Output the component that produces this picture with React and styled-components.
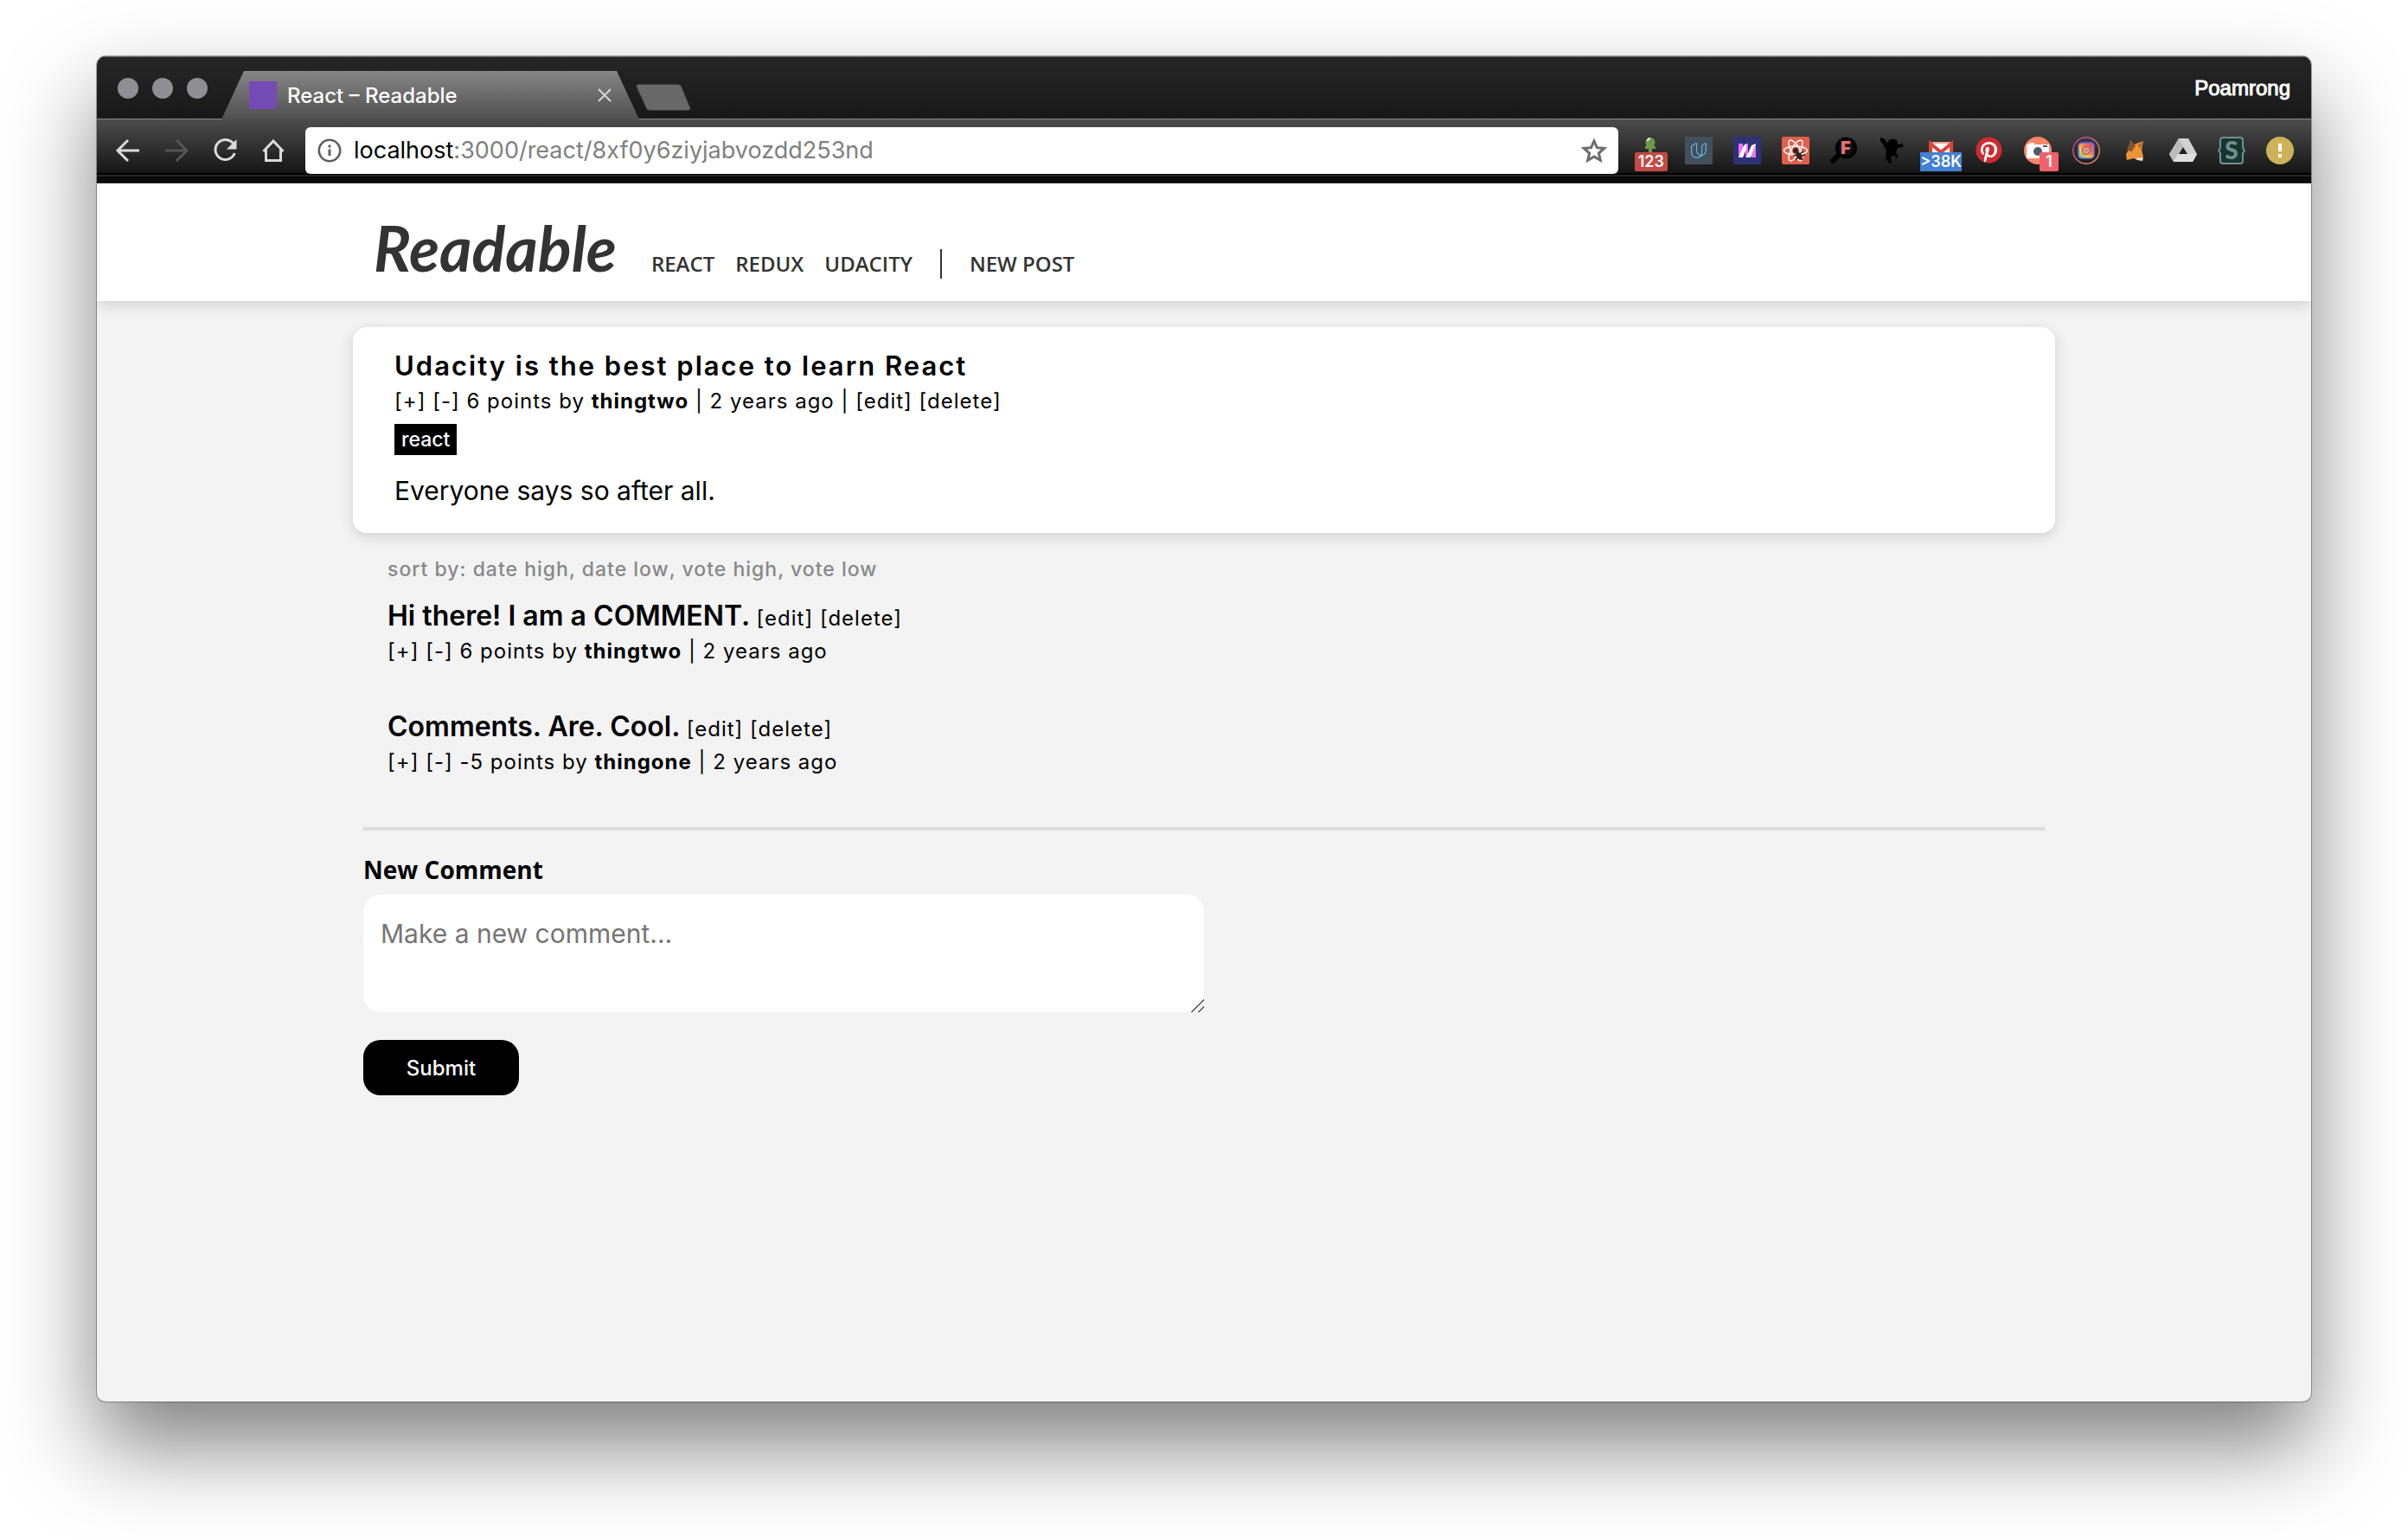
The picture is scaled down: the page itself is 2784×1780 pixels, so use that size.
import React from 'react';
import styled, { createGlobalStyle, css } from 'styled-components';
import { SiUdacity } from 'react-icons/si';
import { FaPinterest } from 'react-icons/fa';

const sans = 'Inter, Roboto, "Liberation Sans", sans-serif';
const humanist = '"Open Sans", "Noto Sans", sans-serif';

const GlobalStyle = createGlobalStyle`
  *, *::before, *::after { box-sizing: border-box; }
  body { margin: 0; background: #fff; color: #000; font-family: ${sans}; }
  h1, h2, h3, p { margin: 0; }
  button { margin: 0; padding: 0; border: 0; background: none; color: inherit; font: inherit; letter-spacing: inherit; cursor: pointer; }
  a { color: inherit; text-decoration: none; }
`;

/* ---------- window ---------- */

const Desktop = styled.div`
  display: flex;
  min-height: 100vh;
  padding: 65px 112px 160px;
`;

const BrowserWindow = styled.div`
  flex: 1;
  min-width: 0;
  display: flex;
  flex-direction: column;
  overflow: hidden;
  border-radius: 10px;
  background: #f3f3f3;
  box-shadow: 0 0 0 1px rgba(0, 0, 0, 0.3), 0 50px 100px rgba(0, 0, 0, 0.5);
`;

const TitleBar = styled.div`
  display: flex;
  height: 73px;
  padding: 0 24px;
  background: linear-gradient(#262626, #181818);
  box-shadow: inset 0 1px #6a6a6a, inset 0 -1px #8a8a8a;
`;

const TrafficLights = styled.div`
  display: flex;
  align-items: center;
  gap: 16px;
`;

const Light = styled.button.attrs({ type: 'button' })`
  width: 24px;
  height: 24px;
  border-radius: 50%;
  background: #8f8e94;
`;

const Tab = styled.div`
  align-self: flex-end;
  display: flex;
  align-items: center;
  width: 483px;
  height: 56px;
  margin-left: 16px;
  padding: 0 32px;
  background: linear-gradient(#868686, #4f4f4f);
  clip-path: polygon(26px 0, 457px 0, 100% 100%, 0 100%);
  color: #fff;
  font-size: 24px;
  font-weight: 500;
`;

const Favicon = styled.span`
  width: 32px;
  height: 32px;
  margin-right: 12px;
  background: #744bb5;
`;

const TabTitle = styled.span`
  flex: 1;
  white-space: nowrap;
`;

const TabClose = styled.button.attrs({ type: 'button' })`
  display: flex;
`;

const NewTab = styled.button.attrs({ type: 'button' })`
  align-self: flex-end;
  display: flex;
  height: 31px;
  margin-bottom: 10px;
  margin-left: -4px;
`;

const Profile = styled.button.attrs({ type: 'button' })`
  align-self: center;
  margin-left: auto;
  color: #fff;
  font-family: "Liberation Sans", Arial, sans-serif;
  font-size: 24px;
  line-height: 32px;
  -webkit-text-stroke: 1px #fff;
`;

const Toolbar = styled.div`
  display: flex;
  gap: 9px;
  height: 74px;
  padding: 9px 8px 11px;
  background: linear-gradient(
    #4c4c4c 0, #151515 62px, #000 62px, #000 64px, #262626 64px, #262626 66px,
    #0b0b0b 66px, #0b0b0b 73px, #2a2a2a 73px
  );
`;

const IconRow = styled.div`
  display: flex;
`;

const IconButton = styled.button.attrs({ type: 'button' })`
  position: relative;
  display: flex;
  align-items: center;
  justify-content: center;
  width: 56px;
  height: 54px;
  color: ${p => (p.$dim ? '#555' : '#dadada')};
`;

const Badge = styled.span`
  position: absolute;
  top: 29px;
  right: ${p => p.$right}px;
  min-width: 22px;
  padding: 0 ${p => p.$pad}px;
  border-radius: ${p => p.$radius}px;
  background: ${p => p.$color};
  color: #fff;
  font-size: 18px;
  font-weight: 600;
  line-height: 22px;
`;

const AddressBar = styled.form`
  flex: 1;
  display: flex;
  align-items: center;
  gap: 12px;
  min-width: 0;
  padding: 0 12px;
  border-radius: 6px;
  background: #fff;
  color: #5f5f5f;
`;

const Url = styled.a`
  flex: 1;
  color: #808080;
  font-size: 27px;
  line-height: 40px;
  white-space: nowrap;
`;

const Host = styled.span`
  color: #000;
`;

const StarButton = styled.button.attrs({ type: 'button' })`
  display: flex;
  color: #6b6b6b;
`;

/* ---------- site header ---------- */

const Container = styled.div`
  max-width: 1968px;
  margin: 0 auto;
`;

const Header = styled.header`
  position: relative;
  height: 136px;
  background: #fff;
  box-shadow: 0 4px 16px rgba(0, 0, 0, 0.15);
`;

const HeaderRow = styled(Container)`
  display: flex;
  align-items: baseline;
  gap: 40px;
  padding: 34px 24px 0;
  color: #333;
`;

const Logo = styled.a`
  font-family: Lato, cursive;
  font-size: 72px;
  font-style: italic;
  font-weight: 700;
  line-height: 80px;
`;

const Nav = styled.nav`
  display: flex;
  align-items: center;
  gap: 24px;
  font-family: ${humanist};
  font-size: 24px;
  font-weight: 600;
  line-height: 32px;
`;

const Divider = styled.span`
  width: 2px;
  height: 34px;
  margin: 0 8px;
  background: #333;
`;

/* ---------- post and comments ---------- */

const Main = styled(Container).attrs({ as: 'main' })`
  padding-top: 30px;
`;

const PostCard = styled.article`
  padding: 24px 48px 28px;
  border-radius: 16px;
  background: #fff;
  box-shadow: 0 4px 16px rgba(0, 0, 0, 0.14);
`;

const PostTitle = styled.h1`
  font-size: 31px;
  font-weight: 600;
  letter-spacing: 2px;
  line-height: 42px;
`;

const smallText = css`
  font-size: 24px;
  font-weight: 400;
  letter-spacing: 1px;
  line-height: 40px;
`;

const Meta = styled.p`
  ${smallText}
`;

const Category = styled.a`
  display: block;
  width: fit-content;
  margin: 6px 0 20px;
  padding: 0 8px;
  background: #000;
  color: #fff;
  font-size: 23px;
  font-weight: 500;
  line-height: 36px;
`;

const PostBody = styled.p`
  font-size: 30px;
  line-height: 42px;
`;

const Comments = styled.section`
  padding: 22px 40px 0;
`;

const SortBar = styled.p`
  ${smallText}
  margin-bottom: 13px;
  color: #888;
  font-size: 23px;
  font-weight: 500;
`;

const CommentItem = styled.article`
  margin-bottom: 46px;
`;

const CommentText = styled.h2`
  font-size: 32px;
  font-weight: 600;
  line-height: 42px;
`;

const CommentActions = styled.span`
  ${smallText}
  line-height: 1;
`;

const Rule = styled.hr`
  height: 4px;
  margin: 55px 12px 25px;
  border: 0;
  background: #ddd;
`;

const CommentForm = styled.form`
  padding: 0 12px;
`;

const Label = styled.label`
  display: block;
  margin-bottom: 9px;
  font-family: ${humanist};
  font-size: 28px;
  font-weight: 700;
  line-height: 40px;
`;

const TextArea = styled.textarea`
  display: block;
  width: 50%;
  height: 136px;
  margin: 0 0 32px;
  padding: 24px 20px;
  border: 0;
  border-radius: 20px;
  background: #fff;
  font-family: ${sans};
  font-size: 30px;
  line-height: 42px;
  &::placeholder { color: #757575; }
  &::-webkit-resizer {
    background: linear-gradient(
      135deg,
      transparent 47%, #555 48%, #555 54%, transparent 55%,
      transparent 75%, #555 76%, #555 82%, transparent 83%
    );
  }
`;

const Submit = styled.button`
  width: 180px;
  height: 64px;
  border-radius: 20px;
  background: #000;
  color: #fff;
  font-size: 24px;
  font-weight: 500;
`;

/* ---------- icons ---------- */

const Drawing = styled.svg`
  flex: none;
  overflow: visible;
`;

const Glyph = ({ size = 32, ...rest }) => (
  <Drawing width={size} height={size} viewBox="0 0 32 32" fill="none" aria-hidden="true" {...rest} />
);

const BackIcon = () => (
  <Glyph stroke="currentColor" strokeWidth="3"><path d="M29 16H5M16 4 4 16l12 12" /></Glyph>
);
const ForwardIcon = () => (
  <Glyph stroke="currentColor" strokeWidth="3"><path d="M3 16h24M16 4l12 12-12 12" /></Glyph>
);
const ReloadIcon = () => (
  <Glyph>
    <path d="M26 8.500A11.500 11.500 0 1 0 27.300 19" stroke="currentColor" strokeWidth="3" />
    <path d="M29.500 3v11.500H18z" fill="currentColor" />
  </Glyph>
);
const HomeIcon = () => (
  <Glyph stroke="currentColor" strokeWidth="3"><path d="M4.500 17 16 5l11.500 12M7.500 15v12.500h17V15" /></Glyph>
);
const InfoIcon = () => (
  <Glyph>
    <circle cx="16" cy="16" r="12.200" stroke="currentColor" strokeWidth="2.600" />
    <path d="M16 14.500v7.500M16 9.500v3" stroke="currentColor" strokeWidth="3" />
  </Glyph>
);
const StarIcon = () => (
  <Glyph stroke="currentColor" strokeWidth="3">
    <path d="m16 5 3.400 7.700 8.300.8-6.300 5.500 1.900 8.200L16 22.900l-7.300 4.300 1.900-8.200-6.300-5.500 8.300-.8z" />
  </Glyph>
);
const CloseIcon = () => (
  <Glyph size={16} stroke="#d6d6d6" strokeWidth="4"><path d="m2 2 28 28M30 2 2 30" /></Glyph>
);
const NewTabIcon = () => (
  <svg width="64" height="31" viewBox="0 0 64 31" aria-hidden="true">
    <path d="M3 .5h46q3 0 4 3l10 24q1 3-2 3H16q-3 0-4-3L1 3.500q-1-3 2-3z" fill="#686868" stroke="#383838" />
  </svg>
);

const SproutIcon = () => (
  <Glyph>
    <circle cx="16" cy="6.500" r="5.500" fill="#6d9a48" />
    <path d="M12 10h8l1 1h1v3h-4v5h-4v-5h-4v-3h1z" fill="#6d9a48" />
    <path d="M13 5q0-3 3-3" stroke="#e4f1d4" strokeWidth="2" />
  </Glyph>
);
const UdacityIcon = () => (
  <Glyph>
    <rect width="32" height="32" fill="#434f5b" />
    <g color="#62b4df"><SiUdacity x="7" y="7" size="18" /></g>
  </Glyph>
);
const StripesIcon = () => (
  <Glyph>
    <rect width="32" height="32" fill="#2e3176" />
    <path d="M6 8h5v9l-5 7zM14 8h3v16h-3zM21 15l5-7v16h-5z" fill="#ea72f5" />
    <path d="m6 24 6-14 3-2v6l-4 10zM15 24l6-14 5-2-6 16z" fill="#fff" />
  </Glyph>
);
const ReactBugIcon = () => (
  <Glyph>
    <rect width="32" height="32" rx="2" fill="#e2604b" />
    <g stroke="#fff" strokeWidth="1.500">
      <ellipse cx="16" cy="16" rx="13.500" ry="5" />
      <ellipse cx="16" cy="16" rx="13.500" ry="5" transform="rotate(60 16 16)" />
      <ellipse cx="16" cy="16" rx="13.500" ry="5" transform="rotate(120 16 16)" />
    </g>
    <circle cx="16" cy="16" r="3" fill="#33201f" />
    <ellipse cx="20" cy="22" rx="3" ry="5" transform="rotate(-35 20 22)" fill="#33201f" />
    <path d="m13 22 5-1m-2 6 3-4m6-6-4 3m6 1-5 1m2 5-2-3" stroke="#33201f" strokeWidth="1.500" />
  </Glyph>
);
const MagnifierIcon = () => (
  <Glyph>
    <path d="m3 28 9-9" stroke="#000" strokeWidth="6" strokeLinecap="round" />
    <circle cx="18.500" cy="13" r="10.500" fill="#111" stroke="#000" strokeWidth="4" />
    <text x="12" y="20" fill="#ee6e73" fontFamily="Inter, sans-serif" fontSize="20" fontWeight="900">F</text>
  </Glyph>
);
const NinjaIcon = () => (
  <Glyph>
    <path d="M2 1 6 2l4 5 2-3q4-3 9 0l1 5 5-1 2 2-1 2-6 1-2 5 3 5-2 2-4-4-3 3 1 5-2 3-5-7 1-9-4-7-3-4z" fill="#000" />
  </Glyph>
);
const MailIcon = () => (
  <Glyph>
    <path d="M2 6h28v18H2z" fill="#fff" />
    <path d="M4 18V8l12 10L28 8v10" stroke="#db4437" strokeWidth="4" />
    <path d="M4 7h24" stroke="#db4437" strokeWidth="1" />
  </Glyph>
);
const PinterestIcon = () => (
  <Glyph>
    <circle cx="15" cy="16" r="14" fill="#fff" />
    <g color="#cf2a30"><FaPinterest size="31" /></g>
  </Glyph>
);
const CameraIcon = () => (
  <Glyph>
    <circle cx="16" cy="16" r="16" fill="#ff8568" />
    <path d="M3 9h3V7h6v2h17v16H3z" fill="#fff" />
    <circle cx="16" cy="17" r="5" fill="#4c5a6b" />
    <path d="M22 11h5" stroke="#4c5a6b" strokeWidth="2" />
  </Glyph>
);
const InstaIcon = () => (
  <Glyph>
    <defs>
      <linearGradient id="ring" x1="0" y1="0" x2="1" y2="1">
        <stop offset="0" stopColor="#b13aa8" /><stop offset="1" stopColor="#f39a5c" />
      </linearGradient>
      <linearGradient id="lens" x1="0" y1="1" x2="1" y2="0">
        <stop offset="0" stopColor="#35c9a0" /><stop offset=".35" stopColor="#f2d04b" />
        <stop offset=".65" stopColor="#f0704f" /><stop offset="1" stopColor="#b14bd6" />
      </linearGradient>
    </defs>
    <circle cx="16" cy="16" r="15.200" stroke="url(#ring)" strokeWidth="1.400" />
    <rect x="7" y="7" width="18" height="18" rx="4" fill="url(#lens)" stroke="#6a6be0" strokeWidth="1.500" />
    <circle cx="16" cy="16" r="4.500" stroke="#d9487c" strokeWidth="1.600" fill="#e9a35c" />
    <circle cx="16" cy="16" r="1.500" fill="#4ea8e8" />
    <circle cx="21" cy="10.500" r="1.200" fill="#e0483e" />
  </Glyph>
);
const FoxIcon = () => (
  <Glyph>
    <path d="m11 4 4 5 11-4-2 10 2 8-4 3-7-1-8 2-1-7 4-6z" fill="#ef9433" />
    <path d="m11 4 6 6-4 7-6-1z" fill="#86522b" />
    <path d="m26 5-7 5 4 4z" fill="#b86b26" />
    <path d="m16 25 10-1-1 4-6-1z" fill="#e8e2dc" />
  </Glyph>
);
const DriveIcon = () => (
  <Glyph>
    <path d="M11 2h11l10 18-5 9H5l-5-9z" fill="#d2d2d2" />
    <path d="m11 2 5 9L5 29l-5-9z" fill="#bcbcbc" />
    <path d="M10 20h22l-5 9H5z" fill="#dedede" />
    <path d="m16 12 5 8H11z" fill="#1f1f1f" />
  </Glyph>
);
const BracesIcon = () => (
  <Glyph>
    <path d="M6 1h20q3 0 3 3v9l2 3-2 3v9q0 3-3 3H6q-3 0-3-3v-9l-2-3 2-3V4q0-3 3-3z" fill="#17342f" stroke="#71908e" strokeWidth="2" />
    <text x="16" y="26" textAnchor="middle" fill="#71908e" fontFamily="Lato, sans-serif" fontSize="28" fontWeight="900">S</text>
  </Glyph>
);
const AlertIcon = () => (
  <Glyph>
    <circle cx="16" cy="16" r="16" fill="#ceb25a" />
    <path d="M16 8v9M16 20v4" stroke="#fff" strokeWidth="4" />
  </Glyph>
);

/* ---------- data ---------- */

const extensions = [
  { name: 'Sprout', Icon: SproutIcon, badge: { text: '123', color: '#c44a43', right: 8, pad: 4, radius: 2 } },
  { name: 'Udacity', Icon: UdacityIcon },
  { name: 'Stripes', Icon: StripesIcon },
  { name: 'React debugger', Icon: ReactBugIcon },
  { name: 'Font finder', Icon: MagnifierIcon },
  { name: 'Ninja', Icon: NinjaIcon },
  { name: 'Mail', Icon: MailIcon, badge: { text: '>38K', color: '#4380d6', right: 4, pad: 0, radius: 0 } },
  { name: 'Pinterest', Icon: PinterestIcon },
  { name: 'Camera', Icon: CameraIcon, badge: { text: '1', color: '#f0626c', right: 4, pad: 7, radius: 2 } },
  { name: 'Instagram', Icon: InstaIcon },
  { name: 'Fox wallet', Icon: FoxIcon },
  { name: 'Drive', Icon: DriveIcon },
  { name: 'Snippets', Icon: BracesIcon },
  { name: 'Updates', Icon: AlertIcon },
];

const comments = [
  { id: 1, text: 'Hi there! I am a COMMENT.', score: 6, author: 'thingtwo' },
  { id: 2, text: 'Comments. Are. Cool.', score: -5, author: 'thingone' },
];

const sorts = ['date high', 'date low', 'vote high', 'vote low'];

const Votes = ({ score, author }) => (
  <>
    <button type="button">[+]</button> <button type="button">[-]</button> {score} points by{' '}
    <strong>{author}</strong> | 2 years ago
  </>
);

const EditActions = () => (
  <>
    <button type="button">[edit]</button> <button type="button">[delete]</button>
  </>
);

export default function App() {
  return (
    <Desktop>
      <GlobalStyle />
      <BrowserWindow>
        <TitleBar>
          <TrafficLights>
            <Light aria-label="Close window" />
            <Light aria-label="Minimise window" />
            <Light aria-label="Zoom window" />
          </TrafficLights>
          <Tab>
            <Favicon />
            <TabTitle>React – Readable</TabTitle>
            <TabClose aria-label="Close tab"><CloseIcon /></TabClose>
          </Tab>
          <NewTab aria-label="New tab"><NewTabIcon /></NewTab>
          <Profile>Poamrong</Profile>
        </TitleBar>

        <Toolbar>
          <IconRow>
            <IconButton aria-label="Back"><BackIcon /></IconButton>
            <IconButton aria-label="Forward" $dim><ForwardIcon /></IconButton>
            <IconButton aria-label="Reload"><ReloadIcon /></IconButton>
            <IconButton aria-label="Home"><HomeIcon /></IconButton>
          </IconRow>
          <AddressBar>
            <InfoIcon />
            <Url href="#"><Host>localhost</Host>:3000/react/8xf0y6ziyjabvozdd253nd</Url>
            <StarButton aria-label="Bookmark"><StarIcon /></StarButton>
          </AddressBar>
          <IconRow>
            {extensions.map(({ name, Icon, badge }) => (
              <IconButton key={name} aria-label={name}>
                <Icon />
                {badge && (
                  <Badge $color={badge.color} $right={badge.right} $pad={badge.pad} $radius={badge.radius}>
                    {badge.text}
                  </Badge>
                )}
              </IconButton>
            ))}
          </IconRow>
        </Toolbar>

        <Header>
          <HeaderRow>
            <Logo href="#">Readable</Logo>
            <Nav>
              <a href="#react">REACT</a>
              <a href="#redux">REDUX</a>
              <a href="#udacity">UDACITY</a>
              <Divider />
              <a href="#new">NEW POST</a>
            </Nav>
          </HeaderRow>
        </Header>

        <div>
          <Main>
            <PostCard>
              <PostTitle>Udacity is the best place to learn React</PostTitle>
              <Meta><Votes score={6} author="thingtwo" /> | <EditActions /></Meta>
              <Category href="#react">react</Category>
              <PostBody>Everyone says so after all.</PostBody>
            </PostCard>

            <Comments>
              <SortBar>
                sort by:{' '}
                {sorts.map((sort, i) => (
                  <React.Fragment key={sort}>
                    {i > 0 && ', '}
                    <button type="button">{sort}</button>
                  </React.Fragment>
                ))}
              </SortBar>
              {comments.map(({ id, text, score, author }) => (
                <CommentItem key={id}>
                  <CommentText>{text} <CommentActions><EditActions /></CommentActions></CommentText>
                  <Meta><Votes score={score} author={author} /></Meta>
                </CommentItem>
              ))}
            </Comments>

            <Rule />

            <CommentForm onSubmit={e => e.preventDefault()}>
              <Label htmlFor="comment">New Comment</Label>
              <TextArea id="comment" placeholder="Make a new comment..." />
              <Submit type="submit">Submit</Submit>
            </CommentForm>
          </Main>
        </div>
      </BrowserWindow>
    </Desktop>
  );
}
